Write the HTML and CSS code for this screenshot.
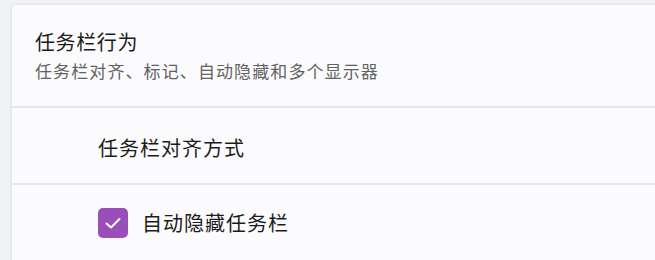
FILE: index.html
```html
<!DOCTYPE html>
<html lang="zh-CN">
<head>
<meta charset="utf-8">
<link rel="stylesheet" href="styles.css">
</head>
<body>
<div class="panel">
  <div class="header">
    <div class="title">任务栏行为</div>
    <div class="subtitle">任务栏对齐、标记、自动隐藏和多个显示器</div>
  </div>
  <div class="row">
    <span class="label">任务栏对齐方式</span>
  </div>
  <div class="row row-check">
    <span class="checkbox">
      <svg class="check-icon" width="22" height="22" viewBox="0 0 22 22"><path d="M4.5 11.5 L9 15.5 L17.5 7" fill="none" stroke="#fff" stroke-width="2" stroke-linecap="round" stroke-linejoin="round"/></svg>
    </span>
    <span class="label">自动隐藏任务栏</span>
  </div>
</div>
</body>
</html>
```
FILE: styles.css
```css
html, body {
  margin: 0;
  padding: 0;
  background: #eef1f5;
  font-family: "Noto Sans CJK SC", "Noto Sans", sans-serif;
  overflow: hidden;
}
.panel {
  margin: 3px 0 0 10px;
  background: #fbfbfd;
  border-top: 2px solid #e6e9ee;
  border-left: 2px solid #e6e9ee;
  border-top-left-radius: 6px;
  height: 260px;
}
.header {
  height: 77px;
  padding: 24px 0 0 23px;
  border-bottom: 2px solid #e3e7ed;
}
.title {
  font-size: 20px;
  line-height: 26px;
  color: #1b1b1b;
  letter-spacing: 0.6px;
}
.subtitle {
  margin-top: 6px;
  font-size: 17px;
  line-height: 20px;
  color: #626262;
  letter-spacing: 1.1px;
  white-space: nowrap;
}
.row {
  height: 71px;
  padding: 4px 0 0 86px;
  display: flex;
  align-items: center;
  border-bottom: 2px solid #e3e7ed;
}
.row-check {
  border-bottom: none;
  height: 52px;
  padding-top: 23px;
  align-items: flex-start;
}
.label {
  font-size: 20px;
  line-height: 30px;
  color: #1b1b1b;
  letter-spacing: 1px;
}
.checkbox {
  width: 30px;
  height: 30px;
  border-radius: 5px;
  background: #9a4eb8;
  display: flex;
  align-items: center;
  justify-content: center;
  margin-right: 14px;
}
.check-icon {
  display: block;
}
```
